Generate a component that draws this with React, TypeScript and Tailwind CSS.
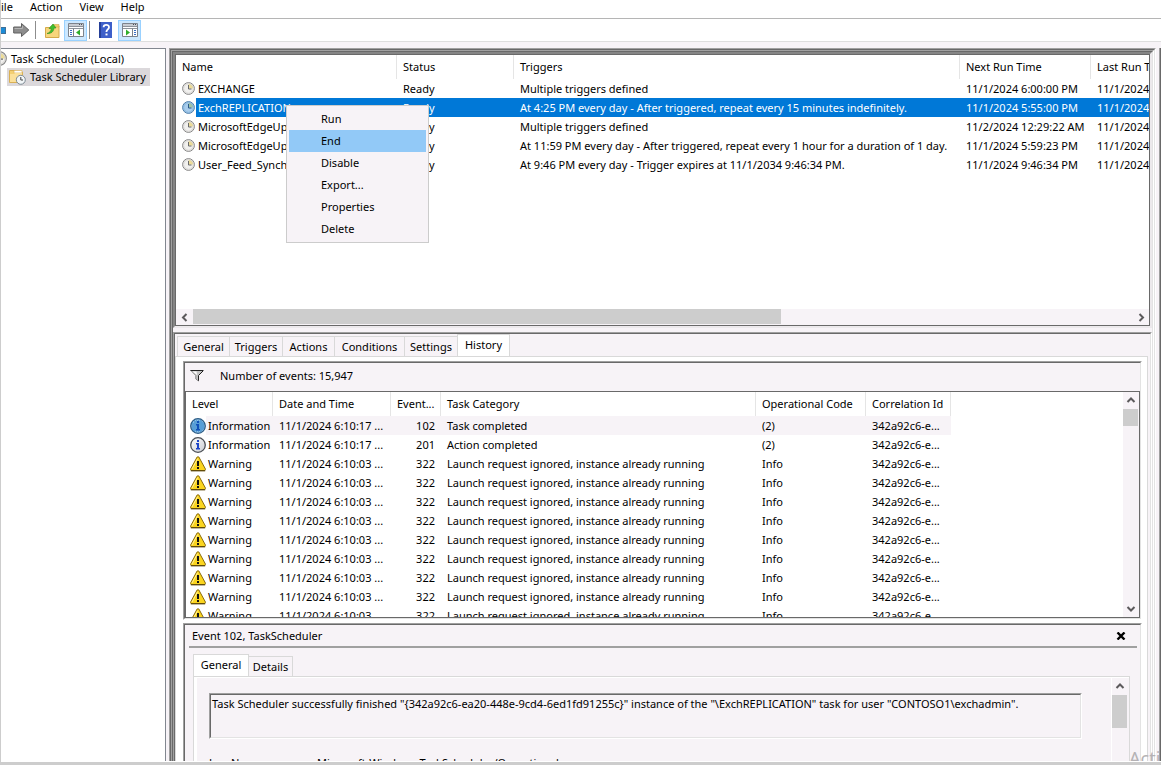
import React from "react";

const tasks = [
  { name: "EXCHANGE", trigger: "Multiple triggers defined", next: "11/1/2024 6:00:00 PM", last: "11/1/2024" },
  {
    name: "ExchREPLICATION",
    trigger: "At 4:25 PM every day - After triggered, repeat every 15 minutes indefinitely.",
    next: "11/1/2024 5:55:00 PM",
    last: "11/1/2024",
  },
  { name: "MicrosoftEdgeUpd", trigger: "Multiple triggers defined", next: "11/2/2024 12:29:22 AM", last: "11/1/2024" },
  {
    name: "MicrosoftEdgeUpd",
    trigger: "At 11:59 PM every day - After triggered, repeat every 1 hour for a duration of 1 day.",
    next: "11/1/2024 5:59:23 PM",
    last: "11/1/2024",
  },
  {
    name: "User_Feed_Synchr",
    trigger: "At 9:46 PM every day - Trigger expires at 11/1/2034 9:46:34 PM.",
    next: "11/1/2024 9:46:34 PM",
    last: "11/1/2024",
  },
];

const warning = {
  level: "Warning",
  date: "11/1/2024 6:10:03 ...",
  id: "322",
  category: "Launch request ignored, instance already running",
  code: "Info",
};

const events = [
  { level: "Information", date: "11/1/2024 6:10:17 ...", id: "102", category: "Task completed", code: "(2)" },
  { level: "Information", date: "11/1/2024 6:10:17 ...", id: "201", category: "Action completed", code: "(2)" },
  ...Array(9).fill(warning),
];

const taskTabs = [
  { label: "General", width: "w-[52px]" },
  { label: "Triggers", width: "w-[53px]" },
  { label: "Actions", width: "w-[52px]" },
  { label: "Conditions", width: "w-[70px]" },
  { label: "Settings", width: "w-[53px]" },
  { label: "History", width: "w-[53px]" },
];
const contextItems = ["Run", "End", "Disable", "Export...", "Properties", "Delete"];

const ClockIcon = ({ selected = false, size = 13 }: { selected?: boolean; size?: number }) => (
  <svg width={size} height={size} viewBox="0 0 13 13" className="shrink-0">
    <circle cx="6.5" cy="6.5" r="5.9" fill={selected ? "#a9cdec" : "#f1f0ee"} stroke={selected ? "#4f7ea8" : "#858585"} />
    <path d="M6.5 6.5V1.7A4.8 4.8 0 0 1 11.3 6.5Z" fill={selected ? "#a3c4a6" : "#ecdc98"} />
    <circle cx="6.5" cy="6.5" r="4.8" fill="none" stroke={selected ? "#7fb0da" : "#cfcdcb"} strokeWidth="0.8" />
    <path d="M6.5 3V7H9.5" fill="none" stroke={selected ? "#2c5a86" : "#6a6a6a"} />
  </svg>
);

const InfoIcon = ({ selected = false }: { selected?: boolean }) => (
  <svg width="16" height="16" viewBox="0 0 16 16" className="shrink-0">
    <defs>
      <linearGradient id="infoFill" x1="0" y1="0" x2="1" y2="1">
        <stop offset="0" stopColor="#fff" />
        <stop offset="1" stopColor="#c9ccd2" />
      </linearGradient>
    </defs>
    <circle cx="8" cy="8" r="7.3" fill={selected ? "#8fc0e6" : "url(#infoFill)"} stroke={selected ? "#2b5c86" : "#4b4f55"} strokeWidth="1.3" />
    {selected && (
      <path
        d="M4 3H12M2 5H14M2 7H14M2 9H14M2 11H14M4 13H12"
        stroke="#1f7cc6"
        strokeDasharray="1 1"
        fill="none"
      />
    )}
    {selected && (
      <path d="M5 4H12M3 6H14M3 8H14M3 10H14M3 12H13" stroke="#1f7cc6" strokeDasharray="1 1" fill="none" />
    )}
    <path d="M7 3H9V5H7ZM6 6H9V11H10V12.5H6V11H7V7.4H6Z" fill={selected ? "#0f4fb8" : "#1c44c8"} />
  </svg>
);

const WarningIcon = () => (
  <svg width="16" height="16" viewBox="0 0 16 16" className="shrink-0">
    <path d="M7.2 0.9H8.8L15.5 13.2L14.8 14.6H1.2L0.5 13.2Z" fill="#fbd51f" stroke="#8a6a08" strokeLinejoin="round" />
    <path d="M7.6 2.6L2 13" stroke="#fff09a" fill="none" />
    <path d="M0.8 14.8H15.2" stroke="#4d3b05" />
    <path d="M7 5H9V10H7ZM7 11H9V13H7Z" fill="#111" />
  </svg>
);

const FolderIcon = () => (
  <svg width="17" height="16" viewBox="0 0 17 16" className="shrink-0">
    <path d="M0.5 1.5H6L7.5 3H13.5V13.5H0.5Z" fill="#f3cf73" stroke="#d9b055" />
    <path d="M5 1.5H13V4H5Z" fill="#fff" stroke="#dcb661" strokeWidth="0.7" />
    <path d="M1 5H5L6 4H13V13H1Z" fill="#fbe09a" />
    <circle cx="11.8" cy="10.8" r="4.5" fill="#f2f6f8" stroke="#7d8a94" />
    <path d="M11.8 8V11H14" fill="none" stroke="#444" />
  </svg>
);

const UpFolderIcon = () => (
  <svg width="15" height="15" viewBox="0 0 15 15">
    <path d="M0.5 4.5H5L6.5 3H14V14.5H0.5Z" fill="#f7d57c" stroke="#d4a94a" />
    <path d="M8 1.5H14V4H8Z" fill="#f2cc6d" stroke="#d4a94a" strokeWidth="0.6" />
    <path d="M2 10.5C5 9.5 6 8 6.3 5.5H4L8 1L11 5H9C8.6 8.5 6.5 10.8 2 10.5Z" fill="#3fbf2e" stroke="#2b8f1f" strokeWidth="0.6" />
  </svg>
);

const ArrowIcon = () => (
  <svg width="17" height="16" viewBox="0 0 17 16">
    <path d="M0.7 5H8.5V1.5L15.8 8L8.5 14.5V11H0.7Z" fill="#8d8d8d" stroke="#606060" strokeLinejoin="round" />
    <path d="M1.5 6.5H9.5V4" stroke="#b5b5b5" fill="none" />
  </svg>
);

const PaneIcon = ({ right = false }: { right?: boolean }) => (
  <svg width="16" height="14" viewBox="0 0 16 14">
    <path d="M0.5 0.5H15.5V13.5H0.5Z" fill="#fff" stroke="#7d838c" />
    <path d="M1 1H15V3H1Z" fill="#c8ccd2" />
    <path d="M1 3.5H15M1 5.5H15" stroke="#8d939b" />
    <path d="M11 1.5H12M13 1.5H14" stroke="#4a4f57" />
    {right ? (
      <>
        <path d="M10.5 5.5V13" stroke="#7d838c" />
        <path d="M12 7.5H14M12 9.5H14M12 11.5H14" stroke="#3b6fc4" />
        <path d="M4 6.5L8 9.5L4 12.5Z" fill="#2fae2a" />
      </>
    ) : (
      <>
        <path d="M5.5 5.5V13" stroke="#7d838c" />
        <path d="M2 7.5H4M2 9.5H4M2 11.5H4" stroke="#3b6fc4" />
        <path d="M12 6.5L8 9.5L12 12.5Z" fill="#2fae2a" />
      </>
    )}
  </svg>
);

const HelpIcon = () => (
  <svg width="13" height="16" viewBox="0 0 13 16">
    <path d="M0 0H13V16H0Z" fill="#3d5fc9" />
    <path d="M0 0H2V16H0Z" fill="#263f98" />
    <path d="M4.6 5.2C4.6 2.2 10 2.2 10 5.2C10 7.4 7.4 7.4 7.4 10" fill="none" stroke="#fff" strokeWidth="1.8" />
    <path d="M6.5 11.5H8.5V13.4H6.5Z" fill="#fff" />
  </svg>
);

const FilterIcon = () => (
  <svg width="14" height="13" viewBox="0 0 14 13">
    <path d="M0.5 1.5H13.5L8.5 6.5V11.5L5.5 9.5V6.5Z" fill="#c4c4c4" />
    <path d="M0.5 1L5.8 6.5V10L8.5 12" stroke="#8a8a8a" fill="none" />
    <path d="M0.5 1.5H13.5M8.5 11.8V6.5L13 2" stroke="#222" fill="none" />
    <path d="M2.5 2.4H6.5L7 6Z" fill="#fff" />
  </svg>
);

const chevrons = {
  up: "M1.5 6L5 2.5L8.5 6",
  down: "M1.5 3L5 6.5L8.5 3",
  left: "M6.5 1L3 4.5L6.5 8",
  right: "M3.5 1L7 4.5L3.5 8",
};

const Chevron = ({ dir }: { dir: keyof typeof chevrons }) => (
  <svg width="10" height="9" viewBox="0 0 10 9">
    <path d={chevrons[dir]} fill="none" stroke="#5c5a5c" strokeWidth="2" />
  </svg>
);

type SunkenProps = { className?: string; open?: boolean; children: React.ReactNode };

// classic two pixel 3D border, dark on the top and left; open ones run on past the window's bottom
const Sunken = ({ className = "", open = false, children }: SunkenProps) => (
  <div
    className={`flex flex-col min-w-0 min-h-0 border-t border-x border-t-[#a0a0a0] border-l-[#a0a0a0] border-r-white border-b-white ${open ? "" : "border-b"} ${className}`}
  >
    <div
      className={`flex flex-col flex-1 min-w-0 min-h-0 border-t border-x border-t-[#696969] border-l-[#696969] border-r-[#e3e3e3] border-b-[#e3e3e3] ${open ? "" : "border-b"}`}
    >
      {children}
    </div>
  </div>
);

const VerticalScroll = ({ thumb, down = true }: { thumb: string; down?: boolean }) => (
  <div className="w-4 shrink-0 flex flex-col bg-[#f7f3f7]">
    <button aria-label="Scroll up" className="h-[17px] flex items-center justify-center">
      <Chevron dir="up" />
    </button>
    <div className={`mr-px bg-[#cdcdcd] ${thumb}`} />
    {down && (
      <button aria-label="Scroll down" className="h-[17px] mt-auto flex items-center justify-center">
        <Chevron dir="down" />
      </button>
    )}
  </div>
);

const ContextMenu = () => (
  <div role="menu" className="absolute left-[110px] top-[50px] w-[143px] p-[2px] bg-[#f7f3f7] border border-[#cccccc]">
    {contextItems.map((item) => (
      <button
        key={item}
        role="menuitem"
        className={`block w-[137px] h-[22px] pl-8 pb-[2px] text-left ${item === "End" ? "bg-[#92c9f7]" : ""}`}
      >
        {item}
      </button>
    ))}
  </div>
);

const TaskList = () => (
  <div className="relative h-[272px] shrink-0 flex flex-col border border-[#696969] bg-white">
    <div className="flex-1 overflow-hidden">
      <table className="w-[1200px] table-fixed border-separate border-spacing-0 whitespace-nowrap">
        <colgroup>
          <col className="w-[221px]" />
          <col className="w-[117px]" />
          <col className="w-[446px]" />
          <col className="w-[131px]" />
          <col />
        </colgroup>
        <thead>
          <tr className="h-6 text-left">
            {["Name", "Status", "Triggers", "Next Run Time", "Last Run Time"].map((h) => (
              <th key={h} className="p-0 pl-[6px] pb-[2px] font-normal border-r border-[#e5e5e5]">
                {h}
              </th>
            ))}
          </tr>
        </thead>
        <tbody>
          {tasks.map((task, i) => {
            const cell = i === 1 ? "p-0 pl-[6px] bg-[#0078d7] text-white" : "p-0 pl-[6px]";
            return (
              <tr key={i} className="h-[19px]">
                <td className="p-0">
                  <div className="flex items-center h-[19px] pl-[6px]">
                    <ClockIcon selected={i === 1} />
                    <span className={`flex-1 h-[19px] leading-[19px] ml-px pl-[2px] ${i === 1 ? "bg-[#0078d7] text-white" : ""}`}>
                      {task.name}
                    </span>
                  </div>
                </td>
                <td className={cell}>Ready</td>
                <td className={cell}>{task.trigger}</td>
                <td className={cell}>{task.next}</td>
                <td className={cell}>{task.last}</td>
              </tr>
            );
          })}
        </tbody>
      </table>
    </div>
    <div className="h-4 flex bg-[#f7f3f7]">
      <button aria-label="Scroll left" className="w-[17px] flex items-center justify-center">
        <Chevron dir="left" />
      </button>
      <div className="w-[588px] h-[15px] bg-[#cdcdcd]" />
      <button aria-label="Scroll right" className="w-[17px] ml-auto flex items-center justify-center">
        <Chevron dir="right" />
      </button>
    </div>
    <ContextMenu />
  </div>
);

const EventTable = () => (
  <div className="flex-1 min-h-0 flex border border-[#696969] bg-white">
    <div className="flex-1 overflow-hidden">
      <table className="w-[765px] table-fixed border-separate border-spacing-0 whitespace-nowrap">
        <colgroup>
          <col className="w-[87px]" />
          <col className="w-[118px]" />
          <col className="w-[50px]" />
          <col className="w-[315px]" />
          <col className="w-[110px]" />
          <col className="w-[85px]" />
        </colgroup>
        <thead>
          <tr className="h-6 text-left">
            {["Level", "Date and Time", "Event...", "Task Category", "Operational Code", "Correlation Id"].map((h) => (
              <th key={h} className="p-0 pl-[6px] pb-[2px] font-normal border-r border-[#e5e5e5]">
                {h}
              </th>
            ))}
          </tr>
        </thead>
        <tbody>
          {events.map((ev, i) => {
            const bg = i === 0 ? "bg-[#f7f3f7]" : "";
            return (
              <tr key={i} className="h-[19px]">
                <td className="p-0">
                  <div className="flex items-center h-[19px] pl-1">
                    {ev.level === "Warning" ? <WarningIcon /> : <InfoIcon selected={i === 0} />}
                    <span className={`flex-1 h-[19px] leading-[19px] pl-[2px] ${bg}`}>{ev.level}</span>
                  </div>
                </td>
                <td className={`p-0 pl-[6px] ${bg}`}>{ev.date}</td>
                <td className={`p-0 pr-[6px] text-right ${bg}`}>{ev.id}</td>
                <td className={`p-0 pl-[6px] ${bg}`}>{ev.category}</td>
                <td className={`p-0 pl-[6px] ${bg}`}>{ev.code}</td>
                <td className={`p-0 pl-[6px] ${bg}`}>342a92c6-e...</td>
              </tr>
            );
          })}
        </tbody>
      </table>
    </div>
    <VerticalScroll thumb="h-[17px]" />
  </div>
);

const EventDetails = () => (
  <Sunken open className="flex-1 mt-[3px] bg-[#f7f3f7]">
    <div className="h-[21px] shrink-0 flex items-center justify-between pl-[7px] pr-[14px]">
      <span>Event 102, TaskScheduler</span>
      <button aria-label="Close">
        <svg width="10" height="8" viewBox="0 0 10 8">
          <path d="M1.5 0.5L8.5 7.5M8.5 0.5L1.5 7.5" stroke="#000" strokeWidth="2.4" />
        </svg>
      </button>
    </div>
    <div className="h-[2px] shrink-0 ml-1 mr-[3px] bg-[#a0a0a0]" />
    <div className="flex flex-col flex-1 min-h-0 ml-2 mr-[10px] pt-[6px]">
      <div className="flex items-end h-[22px] shrink-0">
        <button className="w-14 h-[22px] pb-[2px] bg-white border border-b-0 border-[#d9d9d9]">General</button>
        <button className="w-11 h-5 border border-b-0 border-l-0 border-[#d9d9d9]">Details</button>
      </div>
      <div className="flex flex-1 min-h-0 border border-b-0 border-[#d9d9d9]">
        <div className="flex flex-1 min-h-0 border-l-[3px] border-t border-white">
          <div className="flex-1 pl-3 pt-[15px] overflow-hidden">
            <Sunken className="h-[46px] mr-[29px]">
              <p className="pl-px leading-[17px] whitespace-nowrap">
                Task Scheduler successfully finished "&#123;342a92c6-ea20-448e-9cd4-6ed1fd91255c&#125;" instance of the
                "\ExchREPLICATION" task for user "CONTOSO1\exchadmin".
              </p>
            </Sunken>
            <dl className="flex mt-[14px] leading-[19px]">
              <dt className="w-[108px]">Log Name:</dt>
              <dd>Microsoft-Windows-TaskScheduler/Operational</dd>
            </dl>
          </div>
          <div className="flex pr-px border-l border-white">
            <VerticalScroll thumb="h-[33px]" down={false} />
          </div>
        </div>
      </div>
    </div>
  </Sunken>
);

export default function App() {
  return (
    <div className="relative h-screen flex flex-col overflow-hidden bg-[#f7f3f7] border-l border-[#cdcdcd] font-['Noto_Sans',sans-serif] text-[11px] leading-[15px] text-black">
      <nav className="h-[19px] shrink-0 flex items-start gap-[17px] leading-[13px] bg-white border-b border-[#b5b5b5]">
        <button>ile</button>
        <button>Action</button>
        <button>View</button>
        <button>Help</button>
      </nav>

      <div className="h-[23px] shrink-0 flex items-center bg-white border-b border-[#dedede]">
        <button aria-label="Back" className="w-[5px] h-[7px] bg-[#1c8bd6] border border-[#3f6f96] border-l-0" />
        <button aria-label="Forward" className="ml-[7px]">
          <ArrowIcon />
        </button>
        <div className="w-px h-[18px] ml-[5px] bg-[#8d8d8d]" />
        <button aria-label="Up one level" className="ml-[9px]">
          <UpFolderIcon />
        </button>
        <button aria-label="Show console tree" className="w-[23px] h-[21px] ml-1 flex items-center justify-center bg-[#cce8ff] border border-[#99d1ff]">
          <PaneIcon />
        </button>
        <div className="w-px h-[18px] ml-[2px] bg-[#8d8d8d]" />
        <button aria-label="Help" className="ml-[9px]">
          <HelpIcon />
        </button>
        <button aria-label="Show action pane" className="w-[23px] h-[21px] ml-[6px] flex items-center justify-center bg-[#cce8ff] border border-[#99d1ff]">
          <PaneIcon right />
        </button>
      </div>

      <main className="flex flex-1 min-h-0 pt-[6px]">
        <aside className="w-[165px] shrink-0 overflow-hidden bg-white border-t border-r border-[#828790]">
          <div className="flex items-center h-[19px] -ml-[9px]">
            <ClockIcon size={15} />
            <span className="ml-1">Task Scheduler (Local)</span>
          </div>
          <div className="w-[143px] h-[18px] ml-[6px] pl-[2px] flex items-center gap-1 bg-[#dbd8db] whitespace-nowrap">
            <FolderIcon />
            <span className="pb-[2px]">Task Scheduler Library</span>
          </div>
        </aside>

        <Sunken open className="flex-1 ml-[3px]">
          <Sunken open className="flex-1">
            <div className="flex flex-col shrink-0 border-2 border-t-[#858585] border-l-[#858585] border-r-[#ece9ec] border-b-[#ece9ec]">
              <TaskList />
            </div>

            <div className="flex flex-col flex-1 min-h-0 mt-1">
              <Sunken open className="flex-1">
                <div className="flex items-end h-[22px] shrink-0 pl-[2px]">
                  {taskTabs.map(({ label, width }) => (
                    <button
                      key={label}
                      className={
                        label === "History"
                          ? `${width} h-[22px] pb-[2px] bg-white border border-b-0 border-[#d9d9d9]`
                          : `${width} h-5 border border-b-0 border-r-0 border-[#d9d9d9]`
                      }
                    >
                      {label}
                    </button>
                  ))}
                </div>
                <div className="flex flex-col flex-1 min-h-0 mr-[2px] pt-1 pl-[7px] pr-[5px] bg-white border border-b-0 border-[#d9d9d9]">
                  <Sunken className="h-[259px] shrink-0 bg-[#f7f3f7]">
                    <div className="h-7 shrink-0 flex items-center gap-4 pl-[5px] pb-[3px]">
                      <FilterIcon />
                      <span>Number of events: 15,947</span>
                    </div>
                    <EventTable />
                  </Sunken>
                  <EventDetails />
                </div>
              </Sunken>
            </div>
          </Sunken>
        </Sunken>

        <div className="w-[2px] ml-[3px] bg-[#696969] border-l border-[#a0a0a0]" />
      </main>

      <footer className="h-1 shrink-0 bg-[#cdcdcd] border-t border-white" />
      <span className="absolute right-0 bottom-1 h-3 w-8 overflow-hidden text-lg leading-[18px] whitespace-nowrap text-[#b5b2b5]">Acti</span>
    </div>
  );
}
